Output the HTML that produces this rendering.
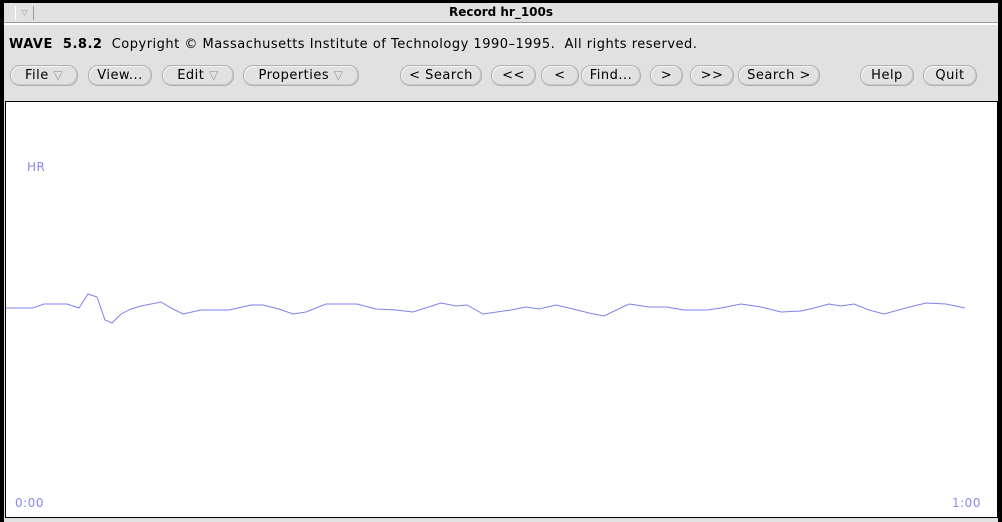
<!DOCTYPE html>
<html><head><style>
body{margin:0;width:1002px;height:522px;background:#000;position:relative;overflow:hidden;font-family:"DejaVu Sans","Liberation Sans",sans-serif;}
.win{position:absolute;left:4px;top:3px;width:994px;height:519px;background:#e1e1e1;}
.title{position:absolute;left:0;top:0;width:994px;height:19px;border-bottom:1px solid #999;box-shadow:0 2px 0 #fff;}
.title .t{position:absolute;left:0;width:994px;text-align:center;top:2px;font-size:12px;font-weight:bold;color:#000;}
.menu{position:absolute;left:11px;top:3px;width:17px;height:14px;border-left:1px solid #fff;border-right:1px solid #999;font-size:8px;color:#999;text-align:center;line-height:14px}
.hdr{position:absolute;left:5px;top:34px;font-size:13px;color:#000;white-space:pre;letter-spacing:0.5px}
.btn{position:absolute;top:62px;height:19px;border:1px solid #b0b0b0;border-radius:10px;font-size:13px;letter-spacing:0.5px;line-height:19px;text-align:center;color:#000;box-shadow:inset -1px -1px 0 #c8c8c8, inset 1px 1px 0 #f4f4f4;}
.btn i{font-style:normal;color:#999;font-size:12px}
.canvas{position:absolute;left:1px;top:98px;width:991px;height:415px;background:#fff;border:1px solid #000;border-right:2px solid #000;}
.lbl{position:absolute;color:#8888ee;font-size:12px;letter-spacing:0.5px}
</style></head><body>
<div class="win">
<div class="title"><div class="menu">▽</div><div class="t">Record hr_100s</div></div>
<div class="hdr"><b>WAVE  5.8.2</b>  Copyright © Massachusetts Institute of Technology 1990–1995.  All rights reserved.</div>
<div class="btn" style="left:6px;width:66px">File <i>▽</i></div>
<div class="btn" style="left:84px;width:62px">View...</div>
<div class="btn" style="left:158px;width:70px">Edit <i>▽</i></div>
<div class="btn" style="left:239px;width:114px">Properties <i>▽</i></div>
<div class="btn" style="left:396px;width:80px">&lt; Search</div>
<div class="btn" style="left:487px;width:43px">&lt;&lt;</div>
<div class="btn" style="left:537px;width:36px">&lt;</div>
<div class="btn" style="left:577px;width:58px">Find...</div>
<div class="btn" style="left:646px;width:31px">&gt;</div>
<div class="btn" style="left:686px;width:42px">&gt;&gt;</div>
<div class="btn" style="left:734px;width:80px">Search &gt;</div>
<div class="btn" style="left:856px;width:52px">Help</div>
<div class="btn" style="left:919px;width:52px">Quit</div>
<div class="canvas">
<div class="lbl" style="left:21px;top:58px">HR</div>
<div class="lbl" style="left:9px;top:394px">0:00</div>
<div class="lbl" style="left:946px;top:394px">1:00</div>
<svg width="991" height="415" style="position:absolute;left:0;top:0">
<polyline fill="none" stroke="#8080f0" stroke-width="1" transform="translate(-5,-102)" points="5,308 32,308 43,304 66,304 78,308 87,294 96,297 104,320 111,323 120,314 130,309 140,306 160,302 170,308 182,314 200,310 228,310 250,305 262,305 278,309 292,314 305,312 325,304 356,304 375,309 395,310 412,312 440,303 455,306 466,305 482,314 510,310 525,307 538,309 555,305 572,309 588,313 603,316 628,304 648,307 665,307 683,310 706,310 720,308 740,304 760,307 780,312 800,311 813,308 828,304 840,306 853,304 868,310 883,314 905,308 925,303 945,304 964,308"/>
</svg>
</div>
</div>
</body></html>
